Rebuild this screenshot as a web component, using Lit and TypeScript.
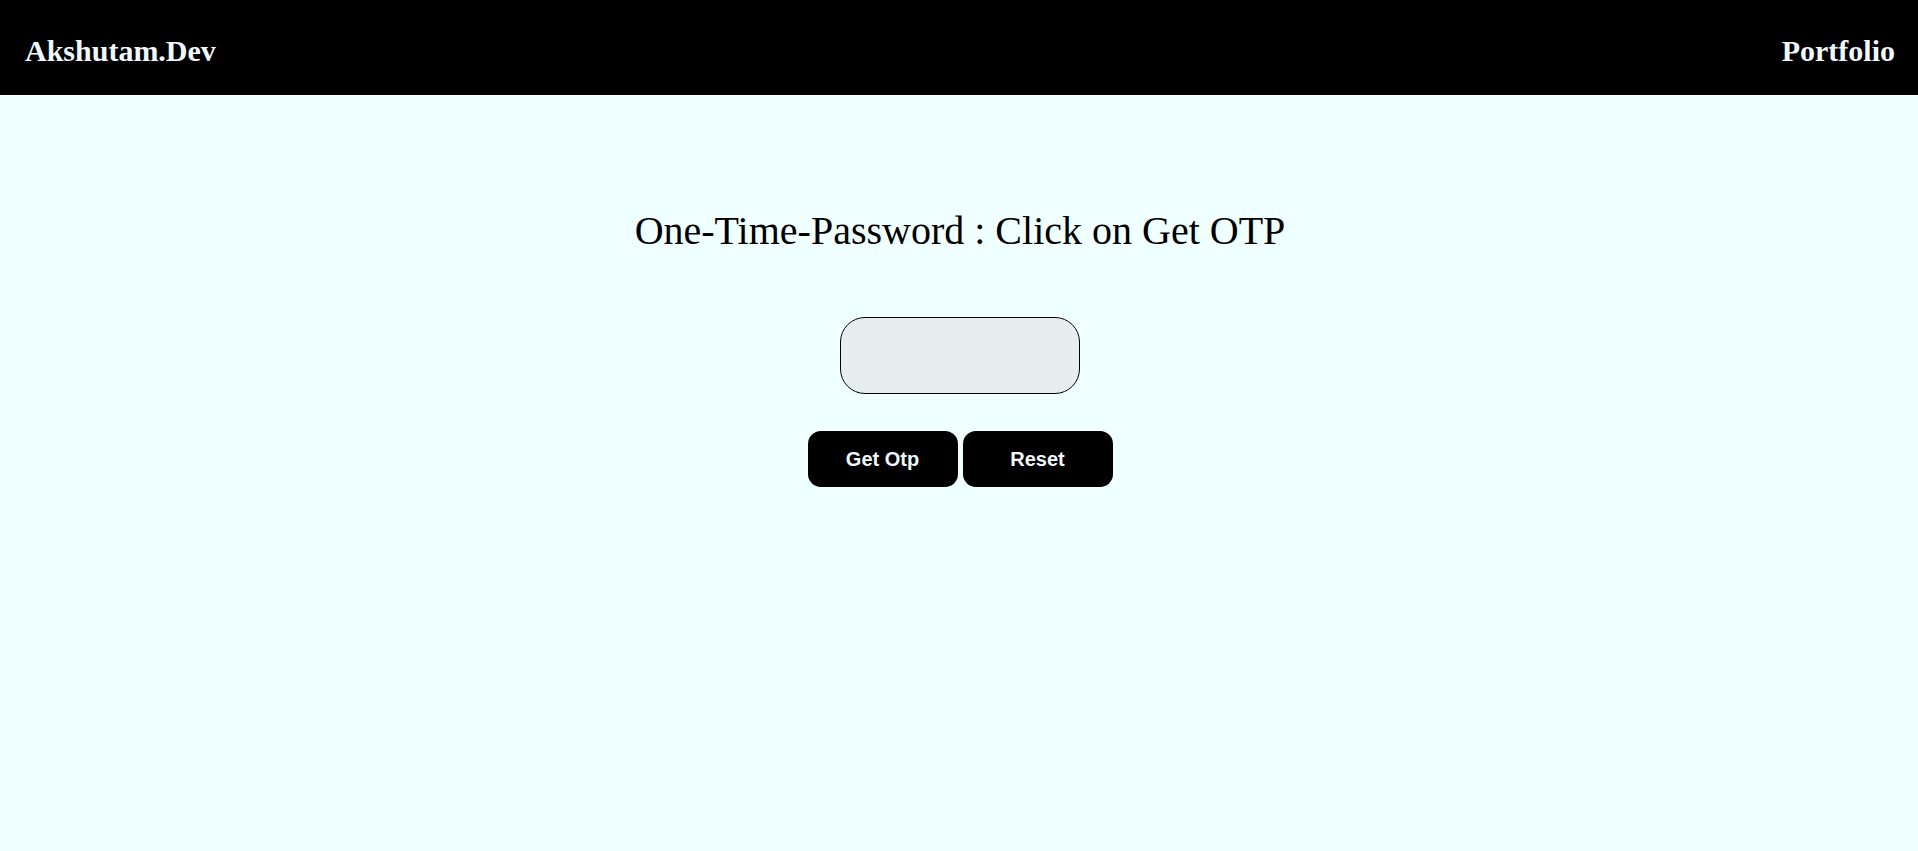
import { LitElement, html, css } from "lit";
import { customElement, state } from "lit/decorators.js";

@customElement("app-root")
export class AppRoot extends LitElement {
  static styles = css`
    :host {
      display: flex;
      flex-direction: column;
      min-height: 100vh;
      background: azure;
      color: #000;
      font-family: "Liberation Serif", "Times New Roman", serif;
    }
    .bar {
      display: flex;
      justify-content: space-between;
      align-items: center;
      padding: 34px 23px 27px 25px;
      background: #000;
    }
    .link {
      color: aliceblue;
      font-size: 30px;
      line-height: 34px;
      font-weight: bold;
      text-decoration: none;
    }
    .panel {
      display: flex;
      flex-direction: column;
      align-items: center;
      padding: 113px 0 40px 2px;
    }
    .title {
      margin: 0;
      font-size: 40px;
      line-height: 46px;
      font-weight: normal;
      text-align: center;
    }
    .code {
      box-sizing: border-box;
      width: 240px;
      height: 77px;
      margin: 63px 0 37px;
      padding: 0 20px;
      border: 1px solid #000;
      border-radius: 25px;
      outline: none;
      background: #e6eef0;
      color: #000;
      font: 40px "Liberation Serif", "Times New Roman", serif;
      text-align: center;
    }
    .actions {
      display: flex;
      gap: 5px;
    }
    .action {
      width: 150px;
      height: 56px;
      padding: 0;
      border: none;
      border-radius: 13px;
      background: #000;
      color: aliceblue;
      font: bold 20px "Liberation Sans", Arial, sans-serif;
      cursor: pointer;
    }
  `;

  @state() private code = "";

  private generate() {
    this.code = String(Math.floor(1000 + Math.random() * 9000));
  }

  private reset() {
    this.code = "";
  }

  render() {
    return html`
      <header class="bar">
        <a class="link" href="#">Akshutam.Dev</a>
        <a class="link" href="#portfolio">Portfolio</a>
      </header>
      <main class="panel">
        <h1 class="title"><label for="code">One-Time-Password : Click on Get OTP</label></h1>
        <input class="code" id="code" type="text" readonly .value=${this.code} />
        <div class="actions">
          <button class="action" type="button" @click=${this.generate}>Get Otp</button>
          <button class="action" type="button" @click=${this.reset}>Reset</button>
        </div>
      </main>
    `;
  }
}
